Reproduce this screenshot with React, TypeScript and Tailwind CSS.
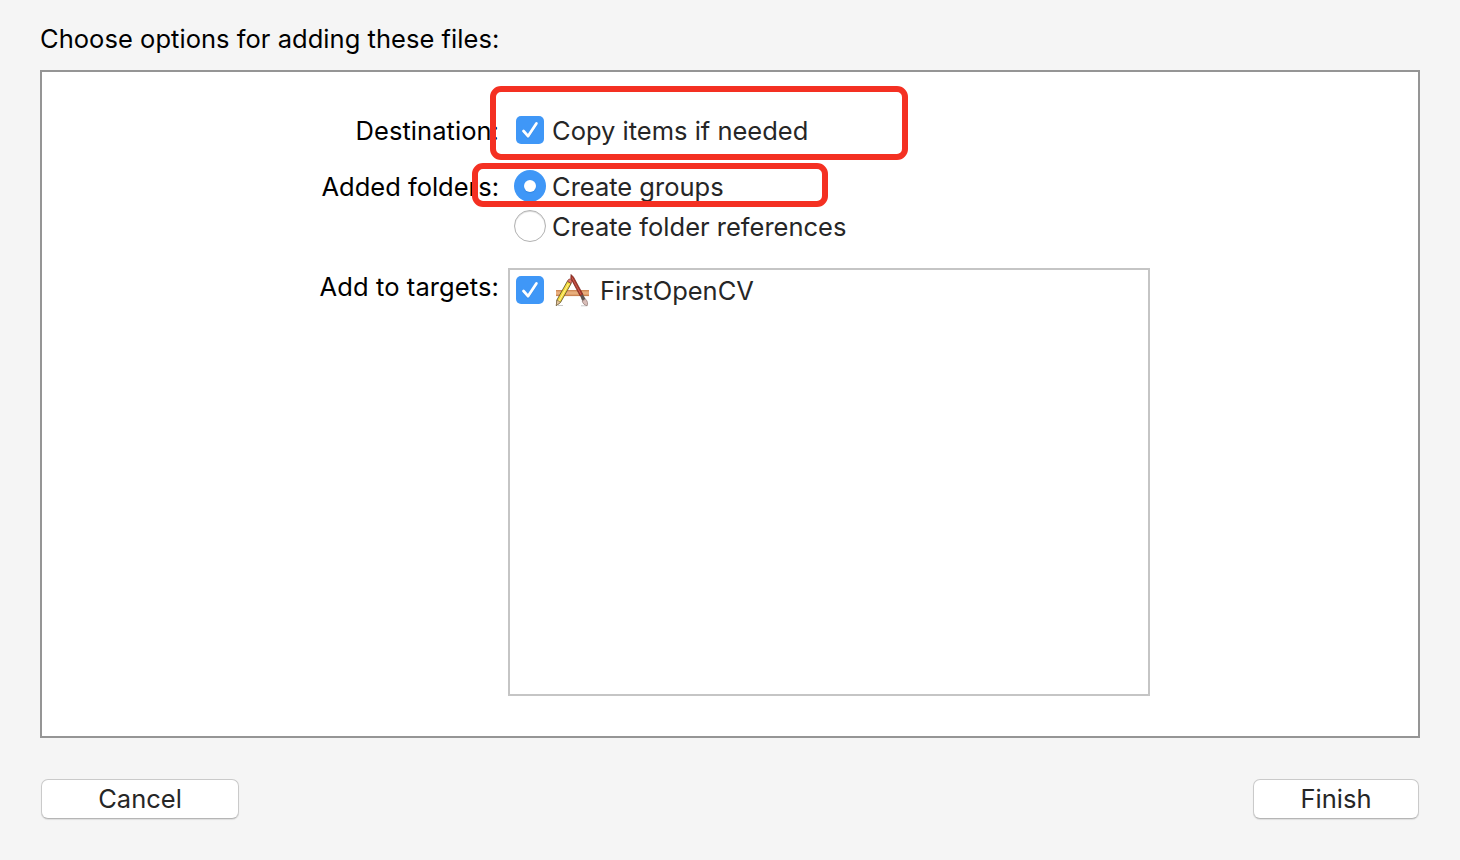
import React, { useState } from 'react';

const CheckBox: React.FC<{ checked: boolean }> = ({ checked }) => (
    <span className={`flex h-7 w-7 shrink-0 rounded-[5px] ${checked ? 'bg-[#3f97f7]' : 'border border-[#b4b4b4] bg-white'}`}>
        {checked && (
            <svg viewBox="0 0 28 28" className="h-7 w-7" fill="none">
                <path d="M7.5 15.8L12 21L20.4 8" stroke="#2577cf" strokeOpacity="0.5" strokeWidth="2.8" strokeLinecap="round" strokeLinejoin="round" />
                <path d="M7.5 15L12 20.2L20.4 7.4" stroke="#fff" strokeWidth="2.8" strokeLinecap="round" strokeLinejoin="round" />
            </svg>
        )}
    </span>
);

const Radio: React.FC<{ checked: boolean }> = ({ checked }) => (
    <span
        className={`flex h-8 w-8 shrink-0 items-center justify-center rounded-full ${
            checked ? 'bg-[#3f97f7]' : 'border border-[#b2b2b2] bg-white shadow-[inset_0_1px_1px_#dcdcdc]'
        }`}
    >
        {checked && <span className="h-3 w-3 rounded-full bg-white shadow-[0_1px_1px_#2577cf80]" />}
    </span>
);

// Ruler, pencil and brush
const AppIcon = () => (
    <svg viewBox="0 0 36 36" className="h-9 w-9 shrink-0">
        <rect x="2" y="16" width="33" height="6" fill="#e0a06c" />
        <path d="M2 16.5H35" stroke="#d18a58" />
        <path d="M2 19H35" stroke="#efbd8e" />
        <path d="M2 21.6H35" stroke="#c98250" />
        <path d="M4 31.5H9M27 31.8H33" stroke="#c9c9c9" strokeWidth="1" />
        <path d="M13.4 7.2L17.2 9.4L6.6 28.3L2.3 31.6L2.9 26Z" fill="#f3da3b" stroke="#68582a" strokeWidth="0.9" strokeLinejoin="round" />
        <path d="M14.5 10L5 27" stroke="#fff293" strokeWidth="1" />
        <path d="M2.9 26L6.6 28.3L2.3 31.6Z" fill="#e6c6a0" stroke="#75644c" strokeWidth="0.6" />
        <path d="M13.4 7.2L14.6 5.4C15.6 4.4 18.1 5.8 17.9 7.6L17 9.4Z" fill="#e17469" stroke="#7e3c34" strokeWidth="0.7" />
        <path d="M17 0.5L19.5 3L29 20.5L26.2 22L16.8 4.5Z" fill="#a63226" stroke="#73271f" strokeWidth="0.7" />
        <path d="M18 3.5L27 20.5" stroke="#d77466" strokeWidth="0.7" />
        <path d="M26.2 22L29 20.5L31.6 25.1L28.2 27Z" fill="#5e5552" />
        <path d="M28.2 27L31.6 25.1C33.8 27.4 33.9 29.8 33.2 31.7C30.6 31.3 28.8 29.6 28.2 27Z" fill="#d8bdb8" stroke="#8f7773" strokeWidth="0.7" />
    </svg>
);

const App: React.FC = () => {
    const [copyItems, setCopyItems] = useState(true);
    const [groups, setGroups] = useState(true);
    const [target, setTarget] = useState(true);

    return (
        <div className="relative flex h-[860px] w-[1460px] flex-col bg-[#f5f5f5] px-10 pt-[19px] font-['Inter',sans-serif] text-[25.5px] leading-10 text-[#262626]">
            <h1 className="h-[51px] whitespace-nowrap tracking-[0.04px] text-black">Choose options for adding these files:</h1>

            <div className="flex h-[668px] flex-col border-2 border-[#959595] bg-white pt-[38px]">
                <div className="flex h-10">
                    <div className="w-[457px] pt-px text-right tracking-[0.05px] text-black">Destination:</div>
                    <div onClick={() => setCopyItems(!copyItems)} className="ml-[17px] flex items-center gap-2">
                        <CheckBox checked={copyItems} />
                        <span className="pt-0.5">Copy items if needed</span>
                    </div>
                </div>

                <div className="mt-4 flex h-20">
                    <div className="w-[457px] pt-px text-right text-black">Added folders:</div>
                    <div className="ml-[15px] flex flex-col">
                        <div onClick={() => setGroups(true)} className="flex h-10 items-center gap-1.5">
                            <Radio checked={groups} />
                            <span className="pt-0.5">Create groups</span>
                        </div>
                        <div onClick={() => setGroups(false)} className="flex h-10 items-center gap-1.5">
                            <Radio checked={!groups} />
                            <span className="pt-0.5">Create folder references</span>
                        </div>
                    </div>
                </div>

                <div className="mt-[21px] flex">
                    <div className="w-[457px] text-right tracking-[0.1px] text-black">Add to targets:</div>
                    <div className="mt-px ml-[9px] h-[428px] w-[642px] border-2 border-[#c5c5c5] bg-white">
                        <div onClick={() => setTarget(!target)} className="flex h-10 items-center pl-1.5">
                            <CheckBox checked={target} />
                            <span className="ml-2.5 pt-[3px]"><AppIcon /></span>
                            <span className="ml-2.5 pt-0.5">FirstOpenCV</span>
                        </div>
                    </div>
                </div>
            </div>

            <div className="mt-[41px] flex justify-between px-px">
                <button className="h-10 w-[198px] rounded-[7px] border border-[#cacaca] border-b-[#b5b5b5] bg-white leading-[38px] shadow-[0_1px_1px_#00000018]">Cancel</button>
                <button className="h-10 w-[166px] rounded-[7px] border border-[#cacaca] border-b-[#b5b5b5] bg-white leading-[38px] shadow-[0_1px_1px_#00000018]">Finish</button>
            </div>

            {/* Highlight rings */}
            <div className="pointer-events-none absolute left-[490px] top-[86px] h-[74px] w-[418px] rounded-[11px] border-6 border-[#f43022]" />
            <div className="pointer-events-none absolute left-[472px] top-[163px] h-[44px] w-[356px] rounded-[11px] border-6 border-[#f43022]" />
        </div>
    );
};

export default App;
